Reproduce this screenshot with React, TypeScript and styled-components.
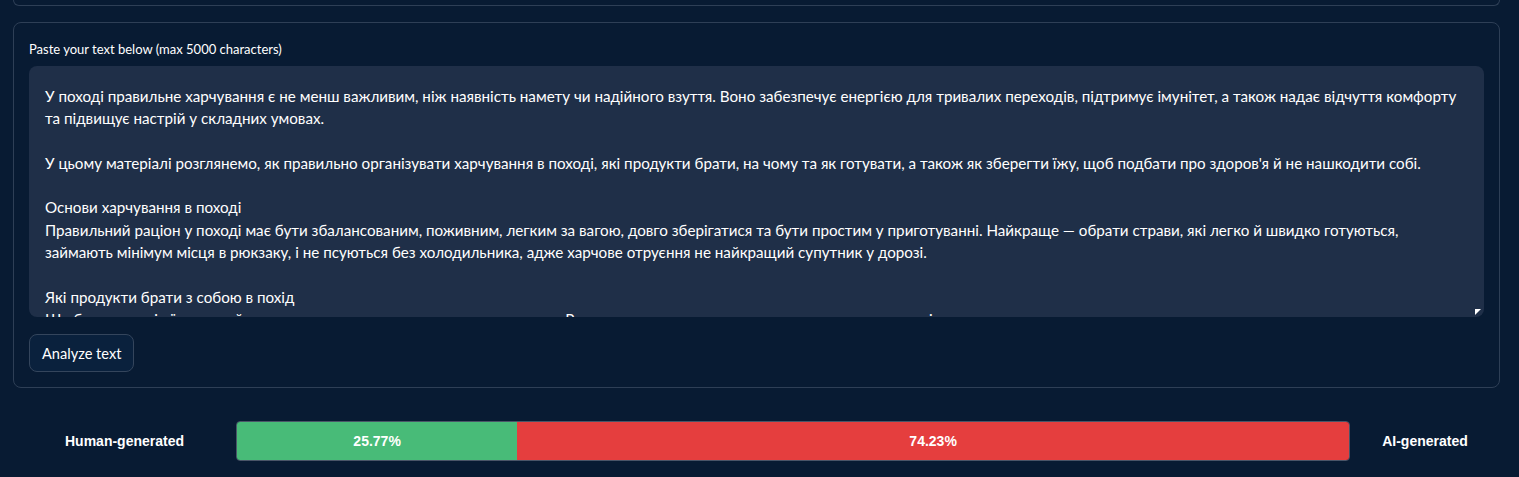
import React from "react";
import styled, {createGlobalStyle} from "styled-components";

const GlobalStyle = createGlobalStyle`
  html, body {
    margin: 0;
    background: #081b33;
    color: #ffffff;
  }
  body {
    font-family: Lato, "Noto Sans", sans-serif;
  }
`;

const Page = styled.div`
  display: flex;
  flex-direction: column;
  gap: 16px;
  padding: 0 19px 0 13px;
`;

const CutPanel = styled.div`
  height: 5px;
  border: 1px solid #2e3f56;
  border-top: none;
  border-radius: 0 0 8px 8px;
`;

const Panel = styled.section`
  display: flex;
  flex-direction: column;
  border: 1px solid #2e3f56;
  border-radius: 8px;
  padding: 18px 15px 15px;
`;

const Label = styled.label`
  font-size: 13px;
  line-height: 16px;
  margin-bottom: 9px;
  color: #ffffff;
`;

const AreaWrap = styled.div`
  position: relative;
`;

const TextArea = styled.textarea`
  display: block;
  box-sizing: border-box;
  width: 100%;
  height: 251px;
  margin: 0;
  padding: 19px 16px;
  border: none;
  border-radius: 8px;
  background: #1f2f48;
  color: #ffffff;
  font-family: Lato, "Noto Sans", sans-serif;
  font-size: 15.2px;
  line-height: 22.3px;
  white-space: pre;
  overflow: hidden;
  resize: none;
  outline: none;
`;

const Grip = styled.span`
  position: absolute;
  right: 3px;
  bottom: 2px;
  width: 0;
  height: 0;
  border-left: 6px solid transparent;
  border-top: 6px solid #ffffff;
  transform: rotate(-90deg);
`;

const Button = styled.button`
  align-self: flex-start;
  margin-top: 17px;
  height: 38px;
  padding: 0 12px;
  border: 1px solid #34455c;
  border-radius: 8px;
  background: #0a213d;
  color: #ffffff;
  font-family: Lato, "Noto Sans", sans-serif;
  font-size: 14.6px;
`;

const ResultRow = styled.div`
  display: grid;
  grid-template-columns: 223px 1fr 150px;
  align-items: center;
  margin-top: 17px;
`;

const SideLabel = styled.div`
  text-align: center;
  font-family: "Liberation Sans", Arial, sans-serif;
  font-weight: 700;
  font-size: 14px;
  color: #ffffff;
`;

const Bar = styled.div`
  display: flex;
  height: 38px;
  border: 1px solid #4a5568;
  border-radius: 4px;
  overflow: hidden;
`;

const Segment = styled.div<{$color: string}>`
  display: flex;
  align-items: center;
  justify-content: center;
  background: ${p => p.$color};
  font-family: "Liberation Sans", Arial, sans-serif;
  font-weight: 700;
  font-size: 14px;
  color: #ffffff;
`;

const TEXT = `У поході правильне харчування є не менш важливим, ніж наявність намету чи надійного взуття. Воно забезпечує енергією для тривалих переходів, підтримує імунітет, а також надає відчуття комфорту
та підвищує настрій у складних умовах.

У цьому матеріалі розглянемо, як правильно організувати харчування в поході, які продукти брати, на чому та як готувати, а також як зберегти їжу, щоб подбати про здоров'я й не нашкодити собі.

Основи харчування в поході
Правильний раціон у поході має бути збалансованим, поживним, легким за вагою, довго зберігатися та бути простим у приготуванні. Найкраще — обрати страви, які легко й швидко готуються,
займають мінімум місця в рюкзаку, і не псуються без холодильника, адже харчове отруєння не найкращий супутник у дорозі.

Які продукти брати з собою в похід
Ще брати в похід їсти — найкраще питання, яке хвилює кожного туриста. Рекомендуємо складати меню, включивши наступні продукти:`;

const human = 25.2;

export default function App() {
    return (
        <Page>
            <GlobalStyle />
            <CutPanel />
            <Panel>
                <Label htmlFor="input-text">Paste your text below (max 5000 characters)</Label>
                <AreaWrap>
                    <TextArea id="input-text" defaultValue={TEXT} spellCheck={false} />
                    <Grip />
                </AreaWrap>
                <Button>Analyze text</Button>
            </Panel>
            <ResultRow>
                <SideLabel>Human-generated</SideLabel>
                <Bar>
                    <Segment $color="#48bb78" style={{width: `${human}%`}}>25.77%</Segment>
                    <Segment $color="#e53e3e" style={{flex: 1}}>74.23%</Segment>
                </Bar>
                <SideLabel>AI-generated</SideLabel>
            </ResultRow>
        </Page>
    );
}
